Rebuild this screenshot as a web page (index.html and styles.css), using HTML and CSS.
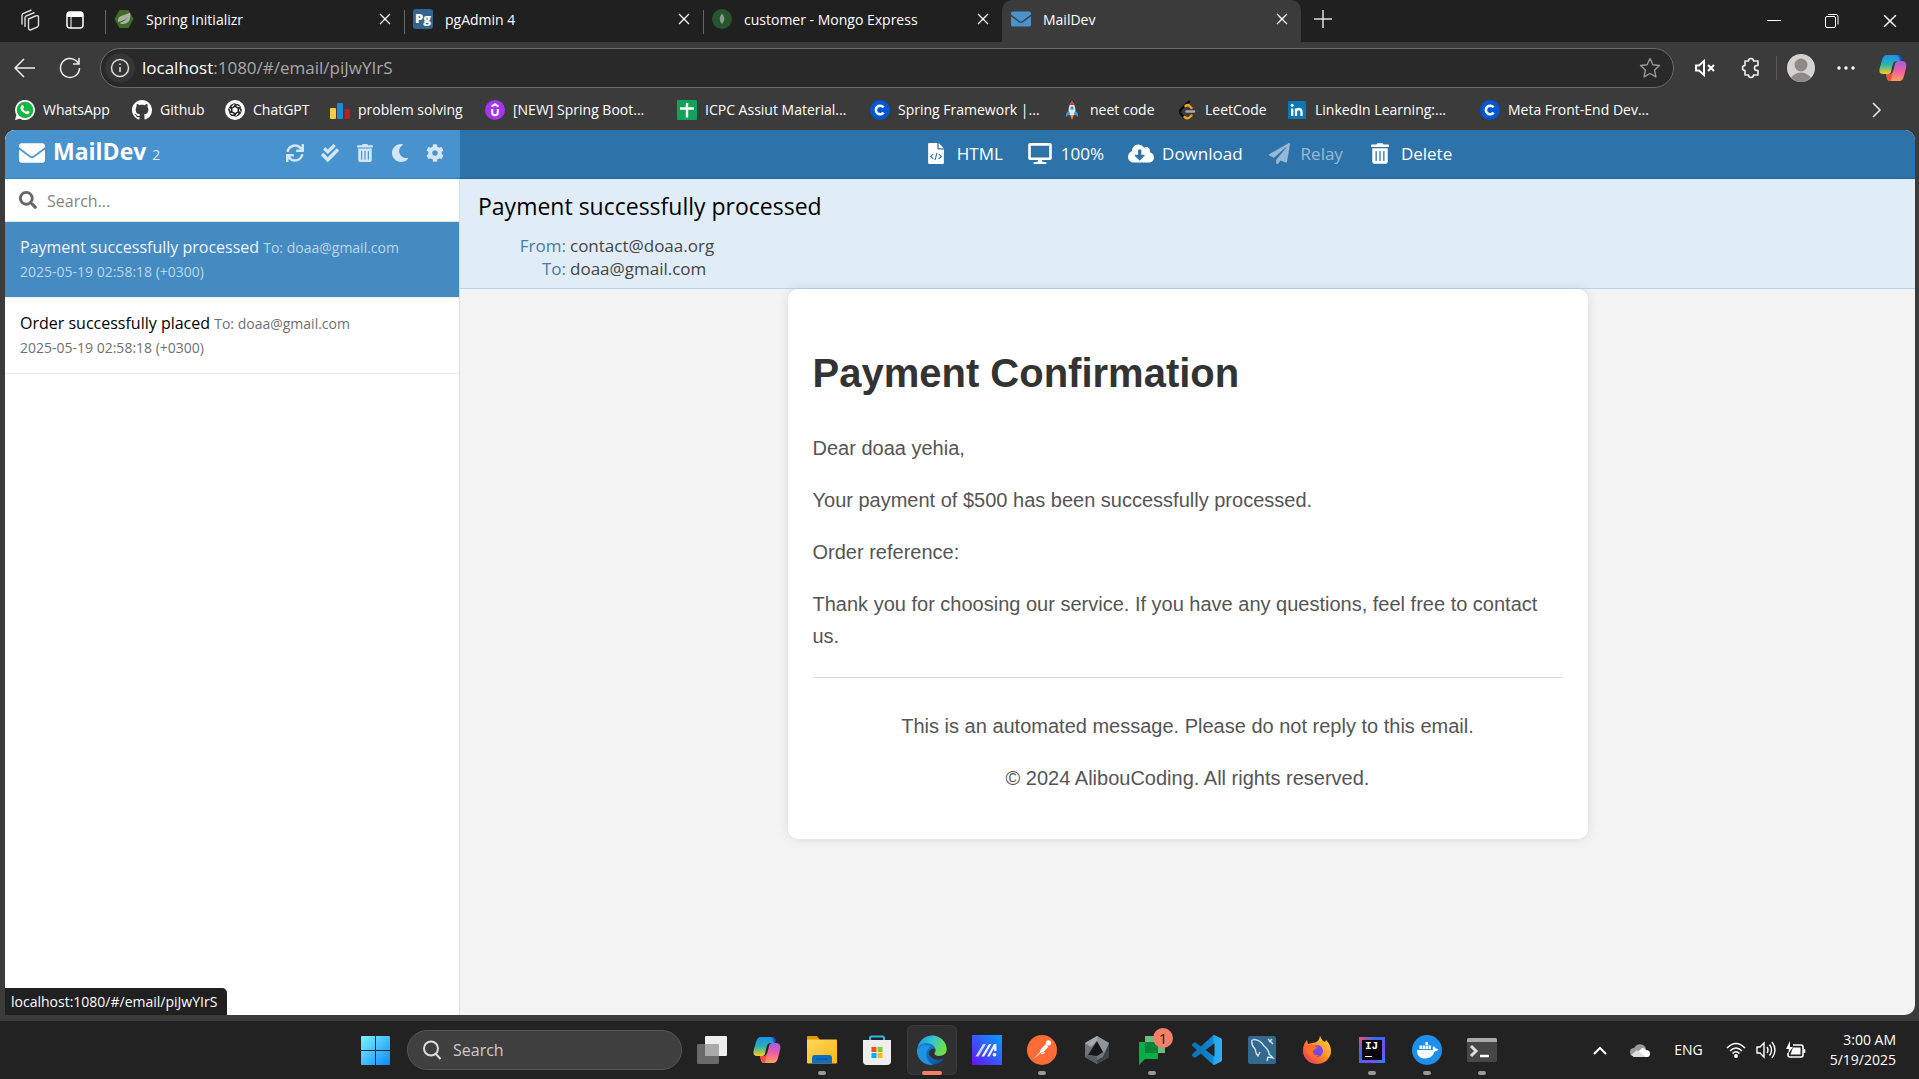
FILE: index.html
```html
<!DOCTYPE html>
<html lang="en">
<head>
<meta charset="utf-8">
<title>MailDev</title>
<link rel="stylesheet" href="styles.css">
</head>
<body>
<svg width="0" height="0" class="defs" aria-hidden="true">
  <defs>
    <linearGradient id="gWin" x1="0" y1="0" x2="1" y2="1"><stop offset="0" stop-color="#7df1ff"/><stop offset="1" stop-color="#0a8cff"/></linearGradient>
    <linearGradient id="gCopA" x1="0" y1="0" x2="0" y2="1"><stop offset="0" stop-color="#1a8fe8"/><stop offset=".5" stop-color="#2bb3b0"/><stop offset="1" stop-color="#f5d020"/></linearGradient>
    <linearGradient id="gCopB" x1="0" y1="0" x2="0" y2="1"><stop offset="0" stop-color="#a45bea"/><stop offset=".5" stop-color="#ee5fa0"/><stop offset="1" stop-color="#ffa05a"/></linearGradient>
    <linearGradient id="gEdge" x1="0" y1="0" x2="1" y2=".3"><stop offset="0" stop-color="#1c8fdc"/><stop offset=".5" stop-color="#2cc0dc"/><stop offset="1" stop-color="#6ee04c"/></linearGradient>
    <linearGradient id="gEdgeLow" x1="0" y1="0" x2="1" y2="1"><stop offset="0" stop-color="#1a84da"/><stop offset="1" stop-color="#0d4f9c"/></linearGradient>
    <linearGradient id="gMax" x1="1" y1="0" x2="0" y2="1"><stop offset="0" stop-color="#00a2ff"/><stop offset="1" stop-color="#6a10f5"/></linearGradient>
    <linearGradient id="gCode" x1="0" y1="0" x2="1" y2="0"><stop offset="0" stop-color="#0a72b5"/><stop offset=".68" stop-color="#0f86cf"/><stop offset=".74" stop-color="#27a5f0"/><stop offset="1" stop-color="#2eaff5"/></linearGradient>
    <linearGradient id="gFox" x1="1" y1="0" x2="0" y2="1"><stop offset="0" stop-color="#ffe14a"/><stop offset=".5" stop-color="#ff8a1f"/><stop offset="1" stop-color="#f0246e"/></linearGradient>
    <linearGradient id="gFold" x1="0" y1="0" x2="1" y2="1"><stop offset="0" stop-color="#ffd65c"/><stop offset="1" stop-color="#fbb914"/></linearGradient>
    <symbol id="x" viewBox="0 0 12 12"><path d="M1 1l10 10M11 1L1 11" stroke="#fff" stroke-width="1.3" fill="none"/></symbol>
    <symbol id="copilot" viewBox="0 0 28 28">
      <path d="M17 1h4l2 3-1 3h-4z" fill="#1c4fd8"/>
      <path d="M8 1h9c3 0 3 3 4 6h-4c-2 0-3 2-4 6l-1 5c-1 2-2 2-4 2H4c-4 0-4-3-3-7L3 6c1-3 2-5 5-5z" fill="url(#gCopA)"/>
      <path d="M20 27h-9c-3 0-3-3-4-7h4c2 0 3-1 4-6l1-4c1-3 2-3 4-3h3c4 0 5 3 4 7l-2 8c-1 3-2 5-5 5z" fill="url(#gCopB)"/>
      <path d="M7 20h4c2 0 2-1 3-3l-2 10c-3 0-4-3-5-7z" fill="#f4503c"/>
    </symbol>
    <symbol id="coursera" viewBox="0 0 20 20"><circle cx="10" cy="10" r="10" fill="#0056d2"/><path d="M13.6 7.4A4.3 4.3 0 1 0 13.6 12.6" fill="none" stroke="#fff" stroke-width="2.6"/></symbol>
    <symbol id="envelope" viewBox="0 64 512 384"><path fill="currentColor" d="M502.3 190.8c3.9-3.1 9.7-.2 9.7 4.7V400c0 26.5-21.5 48-48 48H48c-26.5 0-48-21.5-48-48V195.6c0-5 5.7-7.8 9.7-4.7 22.4 17.4 52.1 39.5 154.1 113.6 21.1 15.4 56.7 47.8 92.2 47.6 35.7.3 72-32.8 92.3-47.6 102-74.1 131.6-96.3 154-113.7zM256 320c23.2.4 56.6-29.2 73.4-41.4 132.7-96.3 142.8-104.7 173.4-128.7 5.8-4.5 9.2-11.5 9.2-18.9v-19c0-26.5-21.5-48-48-48H48c-26.5 0-48 21.5-48 48v19c0 7.4 3.4 14.3 9.2 18.9 30.6 23.9 40.7 32.4 173.4 128.7 16.8 12.2 50.2 41.8 73.4 41.4z"/></symbol>
    <symbol id="trash" viewBox="0 0 448 512"><path fill="currentColor" d="M32 464a48 48 0 0 0 48 48h288a48 48 0 0 0 48-48V128H32zm272-256a16 16 0 0 1 32 0v224a16 16 0 0 1-32 0zm-96 0a16 16 0 0 1 32 0v224a16 16 0 0 1-32 0zm-96 0a16 16 0 0 1 32 0v224a16 16 0 0 1-32 0zM432 32H312l-9.4-18.7A24 24 0 0 0 281.1 0H166.8a23.72 23.72 0 0 0-21.4 13.3L136 32H16A16 16 0 0 0 0 48v32a16 16 0 0 0 16 16h416a16 16 0 0 0 16-16V48a16 16 0 0 0-16-16z"/></symbol>
  </defs>
</svg>

<div class="screen">
  <header class="tabbar">
    <div class="tab-tools">
      <button class="plain" aria-label="Workspaces"><svg width="22" height="22" viewBox="0 0 22 22" fill="none" stroke="#ddd" stroke-width="1.4"><path d="M9.500 10l7-3q3-1 3 1v8q0 1-1 2l-7 3q-2 0-2-2z"/><path d="M6 18V9q0-1 1-2l8.500-3.500M3 15.500V6.500q0-1 1-2L12.500 1"/></svg></button>
      <button class="plain" aria-label="Tab actions"><svg width="20" height="20" viewBox="0 0 20 20"><rect x="2" y="2" width="16" height="16" rx="3" fill="none" stroke="#fff" stroke-width="1.5"/><path d="M2 7V4q0-2 2-2h12q2 0 2 2v3z" fill="#fff"/><path d="M6 7v11" stroke="#fff"/></svg></button>
    </div>
    <nav class="tabs" aria-label="Tabs">
      <div class="tab"><svg class="fav" viewBox="0 0 20 20"><path d="M5.5 1h9L19.5 10l-5 9h-9L.5 10z" fill="#3f6b26"/><path d="M4 13C3 6 10 7 16 3.500c1.500 6-1 11.500-7 11.500-1.500 0-2.500-.3-3.300-1C9 13 12 11 14 8c-3 3-6 4-10 5z" fill="#aab3a3"/></svg><span class="tab-title">Spring Initializr</span><button class="plain close" aria-label="Close tab"><svg width="12" height="12"><use href="#x"/></svg></button></div>
      <div class="tab"><span class="fav pg">Pg</span><span class="tab-title">pgAdmin 4</span><button class="plain close" aria-label="Close tab"><svg width="12" height="12"><use href="#x"/></svg></button></div>
      <div class="tab"><svg class="fav" viewBox="0 0 20 20"><circle cx="10" cy="10" r="10" fill="#28552d"/><path d="M10 4.500c3 3.500 3 7 0 10.500-3-3.500-3-7 0-10.500z" fill="#8d9a8f"/></svg><span class="tab-title">customer - Mongo Express</span><button class="plain close" aria-label="Close tab"><svg width="12" height="12"><use href="#x"/></svg></button></div>
      <div class="tab active"><svg class="fav blue" viewBox="0 0 20 20"><use href="#envelope" width="20" height="20"/></svg><span class="tab-title">MailDev</span><button class="plain close" aria-label="Close tab"><svg width="12" height="12"><use href="#x"/></svg></button></div>
    </nav>
    <button class="plain new-tab" aria-label="New tab"><svg width="18" height="18" viewBox="0 0 18 18"><path d="M9 0v18M0 9h18" stroke="#ddd" stroke-width="1.5"/></svg></button>
    <div class="win">
      <button class="plain" aria-label="Minimize"><svg width="14" height="14"><path d="M0 6.500h14" stroke="#fff"/></svg></button>
      <button class="plain" aria-label="Restore"><svg width="14" height="14" fill="none" stroke="#fff"><rect x=".5" y="2.5" width="10" height="11" rx="1.5"/><path d="M3 .5h8q2 0 2 2v8"/></svg></button>
      <button class="plain" aria-label="Close"><svg width="14" height="14" viewBox="0 0 12 12"><use href="#x"/></svg></button>
    </div>
  </header>

  <div class="toolbar">
    <button class="plain" aria-label="Back"><svg width="22" height="20" viewBox="0 0 22 20" fill="none" stroke="#eee" stroke-width="1.5"><path d="M21 10H1M10 1L1 10l9 9"/></svg></button>
    <button class="plain" aria-label="Refresh"><svg width="22" height="22" viewBox="0 0 22 22" fill="none" stroke="#eee" stroke-width="1.5"><path d="M20.500 11a9.500 9.500 0 1 1-3-7l2.500 2.500M20 1v6h-6"/></svg></button>
    <div class="address">
      <svg width="32" height="32" viewBox="0 0 32 32"><circle cx="16" cy="16" r="15" fill="#353535"/><circle cx="16" cy="16" r="8.500" fill="none" stroke="#ddd" stroke-width="1.5"/><path d="M16 15v5M16 11.500v1.500" stroke="#ddd" stroke-width="1.6"/></svg>
      <span class="url" contenteditable="true" role="textbox" aria-label="Address"><b>localhost</b>:1080/#/email/piJwYIrS</span>
      <button class="plain" aria-label="Favourite"><svg width="22" height="22" viewBox="0 0 22 22"><path d="M11 1.500l2.900 6.200 6.600.8-4.900 4.600 1.300 6.700L11 16.500l-5.900 3.300 1.300-6.700L1.500 8.500l6.600-.8z" fill="none" stroke="#999" stroke-width="1.4" stroke-linejoin="round"/></svg></button>
    </div>
    <div class="actions">
      <button class="plain" aria-label="Unmute"><svg width="22" height="18" viewBox="0 0 22 18" fill="none" stroke="#fff" stroke-width="2"><path d="M10 2v14l-5-4.500H2v-5h3zM14 6l6 6M20 6l-6 6"/></svg></button>
      <button class="plain" aria-label="Extensions"><svg width="22" height="22" viewBox="0 0 22 22" fill="none" stroke="#eee" stroke-width="1.6" stroke-linejoin="round"><path d="M5 4h3.500a2.500 2.500 0 0 1 5 0H18v4.500h-1a2.500 2.500 0 0 0 0 5h1V18h-4.500a2.500 2.500 0 0 1-5 0H5v-4.500a2.500 2.500 0 0 1 0-5z"/></svg></button>
      <div class="profile">
        <span class="rule"></span>
        <button class="plain" aria-label="Profile"><svg width="28" height="28" viewBox="0 0 28 28"><circle cx="14" cy="14" r="14" fill="#d5d2cf"/><circle cx="14" cy="11" r="6.500" fill="#8d8a87"/><path d="M4 23.500q10-10 20 0-10 9-20 0z" fill="#8d8a87"/></svg></button>
      </div>
      <button class="plain" aria-label="Settings and more"><svg width="18" height="4"><circle cx="2" cy="2" r="1.7" fill="#fff"/><circle cx="9" cy="2" r="1.7" fill="#fff"/><circle cx="16" cy="2" r="1.7" fill="#fff"/></svg></button>
      <button class="plain" aria-label="Copilot"><svg width="28" height="28"><use href="#copilot"/></svg></button>
    </div>
  </div>

  <nav class="bookmarks" aria-label="Favourites">
    <a href="#"><svg viewBox="0 0 20 20"><path d="M10 0a10 10 0 1 1-5 18.700L0 20l1.400-5A10 10 0 0 1 10 0z" fill="#fff"/><circle cx="10" cy="10" r="8.300" fill="#15b83f"/><path d="M6.500 5.500q1.500-1 2 .5l.5 1.500-1 1.300q1 2 3 3l1.300-1.200 2 1q.8 1-.8 2.200-2.500 1.200-6-2T6.500 5.500z" fill="#fff"/></svg>WhatsApp</a>
    <a href="#"><svg viewBox="0 0 16 16"><path fill="#fff" d="M8 0C3.580 0 0 3.580 0 8c0 3.540 2.290 6.530 5.470 7.590.4.070.55-.17.55-.38 0-.19-.01-.82-.01-1.490-2.010.37-2.530-.49-2.690-.94-.09-.23-.48-.94-.82-1.130-.28-.15-.68-.52-.01-.53.63-.01 1.080.58 1.230.82.72 1.210 1.870.87 2.330.66.07-.52.28-.87.51-1.070-1.780-.2-3.640-.89-3.640-3.950 0-.87.31-1.590.82-2.150-.08-.2-.36-1.020.08-2.120 0 0 .67-.21 2.200.82.64-.18 1.320-.27 2-.27s1.360.09 2 .27c1.530-1.040 2.200-.82 2.200-.82.44 1.100.16 1.920.08 2.120.51.56.82 1.270.82 2.150 0 3.070-1.870 3.750-3.650 3.950.29.25.54.73.54 1.480 0 1.070-.01 1.930-.01 2.200 0 .21.15.46.55.38A8.010 8.010 0 0 0 16 8c0-4.420-3.580-8-8-8z"/></svg>Github</a>
    <a href="#"><svg viewBox="0 0 20 20"><circle cx="10" cy="10" r="10" fill="#fff"/><g fill="none" stroke="#222" stroke-width="1"><path id="petal" d="M10 6.500L6.500 8.500v4.300a2.500 2.500 0 0 1-2.300-3.800M6.500 8.500V6.500a2.700 2.700 0 0 1 4.500-2"/><use href="#petal" transform="rotate(60 10 10)"/><use href="#petal" transform="rotate(120 10 10)"/><use href="#petal" transform="rotate(180 10 10)"/><use href="#petal" transform="rotate(240 10 10)"/><use href="#petal" transform="rotate(300 10 10)"/></g></svg>ChatGPT</a>
    <a href="#"><svg viewBox="0 0 20 20"><rect x="0" y="8" width="6" height="11" rx="1" fill="#f8cc45"/><rect x="7" y="3" width="6" height="16" rx="1" fill="#1d8ad2"/><rect x="14.500" y="9" width="5.500" height="10" rx="1" fill="#b61f24"/></svg>problem solving</a>
    <a href="#"><svg viewBox="0 0 20 20"><circle cx="10" cy="10" r="10" fill="#a435f0"/><path d="M6.500 6.500L10 4.300l3.500 2.200M7.200 9v3.500a2.800 2.800 0 0 0 5.600 0V9" fill="none" stroke="#fff" stroke-width="2"/></svg>[NEW] Spring Boot...</a>
    <a href="#"><svg viewBox="0 0 20 20"><rect width="20" height="20" rx="1" fill="#12a05a"/><path d="M10 3v14.500M3 8.500h14" stroke="#fff" stroke-width="2.4"/></svg>ICPC Assiut Material...</a>
    <a href="#"><svg><use href="#coursera"/></svg>Spring Framework |...</a>
    <a href="#"><svg viewBox="0 0 20 20"><path d="M10 1q5 6 2.500 14h-5Q5 7 10 1z" fill="#dfe7ee"/><path d="M10 1l2.500 4h-5z" fill="#d9312c"/><path d="M6.500 10L4 14v3l4-3zM13.500 10l2.500 4v3l-4-3z" fill="#3d95d8"/><circle cx="10" cy="8" r="1.6" fill="#287fc7"/><path d="M8 15h4l-2 5z" fill="#ff8c22"/></svg>neet code</a>
    <a href="#"><svg viewBox="0 0 20 20" fill="none" stroke-width="2.4" stroke-linecap="round"><path d="M12 1.500L4 9.500q-2 2.500 0 4.500l3 3.500" stroke="#080808"/><path d="M8.500 6q2.500-2 4.500.5l1.500 1.500M7.500 17q3 2.500 5.500 0l1.500-1.500" stroke="#f5a31b"/><path d="M9.500 11.500H17" stroke="#a8a8a8"/></svg>LeetCode</a>
    <a href="#"><svg viewBox="0 0 20 20"><rect x="1" y="1" width="18" height="18" rx="1" fill="#0a76b8"/><path d="M5.200 8.500V16M9 16V8.500M9 12q0-3 2.800-3 2.700 0 2.700 3v4" stroke="#fff" stroke-width="2.3" fill="none"/><circle cx="5.200" cy="5.200" r="1.5" fill="#fff"/></svg>LinkedIn Learning:...</a>
    <a href="#"><svg><use href="#coursera"/></svg>Meta Front-End Dev...</a>
    <button class="plain" aria-label="More favourites"><svg width="10" height="16" viewBox="0 0 10 16"><path d="M1 1l7 7-7 7" fill="none" stroke="#eee" stroke-width="1.5"/></svg></button>
  </nav>

  <div class="app">
    <aside class="sidebar">
      <div class="brandbar">
        <a class="brand" href="#"><svg width="26" height="20"><use href="#envelope"/></svg><strong>MailDev</strong><small>2</small></a>
        <div class="side-tools">
          <button class="plain" aria-label="Reload"><svg width="18" height="18" viewBox="0 0 512 512"><path fill="currentColor" d="M440.65 12.57l4 82.77A247.16 247.16 0 0 0 255.83 8C134.73 8 33.91 94.92 12.29 209.82A12 12 0 0 0 24.09 224h49.05a12 12 0 0 0 11.67-9.26 175.91 175.91 0 0 1 317-56.94l-101.46-4.86a12 12 0 0 0-12.57 12v47.41a12 12 0 0 0 12 12H500a12 12 0 0 0 12-12V12a12 12 0 0 0-12-12h-47.37a12 12 0 0 0-11.98 12.57zM255.83 432a175.61 175.61 0 0 1-146-77.8l101.8 4.87a12 12 0 0 0 12.57-12v-47.4a12 12 0 0 0-12-12H12a12 12 0 0 0-12 12V500a12 12 0 0 0 12 12h47.35a12 12 0 0 0 12-12.6l-4.15-82.57A247.17 247.17 0 0 0 255.83 504c121.11 0 221.93-86.92 243.55-201.82a12 12 0 0 0-11.8-14.18h-49.05a12 12 0 0 0-11.67 9.26A175.86 175.86 0 0 1 255.83 432z"/></svg></button>
          <button class="plain" aria-label="Mark all read"><svg width="18" height="18" viewBox="0 0 512 512"><path fill="currentColor" d="M505 174.800l-39.600-39.600c-9.400-9.400-24.600-9.400-33.900 0L192 374.700 80.600 263.200c-9.400-9.400-24.600-9.400-33.900 0L7 302.900c-9.400 9.400-9.400 24.600 0 34L175 505c9.400 9.400 24.600 9.400 33.900 0l296-296.200c9.400-9.500 9.400-24.700.1-34zm-324.300 106c6.200 6.300 16.400 6.300 22.600 0l208-208.200c6.200-6.300 6.200-16.400 0-22.600L366.100 4.700c-6.200-6.300-16.400-6.300-22.600 0L192 156.200l-55.400-55.500c-6.200-6.300-16.400-6.300-22.600 0L68.700 146c-6.200 6.300-6.200 16.400 0 22.600l112 112.200z"/></svg></button>
          <button class="plain" aria-label="Delete all"><svg width="16" height="18"><use href="#trash"/></svg></button>
          <button class="plain" aria-label="Dark theme"><svg width="18" height="18" viewBox="0 0 512 512"><path fill="currentColor" d="M283.211 512c78.962 0 151.079-35.925 198.857-94.792 7.068-8.708-.639-21.430-11.562-19.350-124.203 23.654-238.262-71.576-238.262-196.954 0-72.222 38.662-138.635 101.498-174.394 9.686-5.512 7.250-20.197-3.756-22.230A258.156 258.156 0 0 0 283.211 0c-141.309 0-256 114.511-256 256 0 141.309 114.511 256 256 256z"/></svg></button>
          <button class="plain" aria-label="Settings"><svg width="18" height="18" viewBox="0 0 512 512"><path fill="currentColor" d="M487.400 315.700l-42.600-24.600c4.300-23.200 4.300-47 0-70.200l42.600-24.600c4.900-2.800 7.100-8.600 5.500-14-11.100-35.600-30-67.800-54.700-94.600-3.800-4.100-10-5.100-14.800-2.300L380.800 110c-17.900-15.400-38.500-27.300-60.800-35.100V25.800c0-5.600-3.900-10.500-9.400-11.700-36.700-8.200-74.300-7.800-109.200 0-5.500 1.200-9.400 6.100-9.400 11.700V75c-22.200 7.900-42.800 19.800-60.800 35.100L88.700 85.500c-4.900-2.800-11-1.900-14.800 2.300-24.700 26.700-43.600 58.900-54.700 94.600-1.700 5.400.6 11.200 5.500 14L67.300 221c-4.300 23.200-4.300 47 0 70.200l-42.600 24.600c-4.900 2.800-7.100 8.600-5.500 14 11.100 35.600 30 67.800 54.700 94.600 3.800 4.100 10 5.100 14.800 2.300l42.600-24.600c17.900 15.400 38.500 27.300 60.800 35.100v49.200c0 5.600 3.900 10.500 9.400 11.700 36.700 8.200 74.300 7.800 109.200 0 5.500-1.200 9.400-6.100 9.400-11.700v-49.200c22.200-7.900 42.800-19.800 60.800-35.100l42.600 24.600c4.900 2.800 11 1.900 14.800-2.300 24.700-26.700 43.600-58.900 54.700-94.600 1.500-5.500-.7-11.300-5.600-14.100zM256 336c-44.100 0-80-35.900-80-80s35.900-80 80-80 80 35.900 80 80-35.900 80-80 80z"/></svg></button>
        </div>
      </div>
      <div class="inbox">
        <label class="search">
          <svg width="18" height="18" viewBox="0 0 512 512"><path fill="#666" d="M505 442.700L405.300 343c-4.500-4.500-10.600-7-17-7H372c27.600-35.300 44-79.700 44-128C416 93.100 322.900 0 208 0S0 93.100 0 208s93.100 208 208 208c48.300 0 92.700-16.400 128-44v16.300c0 6.400 2.500 12.500 7 17l99.700 99.700c9.400 9.400 24.600 9.400 33.900 0l28.300-28.300c9.400-9.400 9.400-24.600.1-34zM208 336c-70.700 0-128-57.200-128-128 0-70.700 57.200-128 128-128 70.700 0 128 57.200 128 128 0 70.700-57.200 128-128 128z"/></svg>
          <input type="search" placeholder="Search..." aria-label="Search">
        </label>
        <ul class="mails">
          <li><a class="mail selected" href="#/email/piJwYIrS"><span class="line"><span class="subject">Payment successfully processed</span> <span class="to">To: doaa@gmail.com</span></span><span class="date">2025-05-19 02:58:18 (+0300)</span></a></li>
          <li><a class="mail" href="#"><span class="line"><span class="subject">Order successfully placed</span> <span class="to">To: doaa@gmail.com</span></span><span class="date">2025-05-19 02:58:18 (+0300)</span></a></li>
        </ul>
      </div>
      <div class="status">localhost:1080/#/email/piJwYIrS</div>
    </aside>

    <main class="reader">
      <div class="mail-actions">
        <button class="plain"><span class="ico"><svg width="16" height="21" viewBox="0 0 384 512"><path fill="#fff" fill-rule="evenodd" d="M24 0h200v136q0 24 24 24h136v328q0 24-24 24H24q-24 0-24-24V24Q0 0 24 0zM256 0l128 128H256z"/><path d="M125 270l-62 58 62 58M259 270l62 58-62 58M216 240l-48 176" fill="none" stroke="#2d73aa" stroke-width="28"/></svg></span><span>HTML</span></button>
        <button class="plain"><span class="ico"><svg width="24" height="21" viewBox="0 0 576 512"><path fill="#fff" d="M528 0H48C21.500 0 0 21.500 0 48v320c0 26.500 21.500 48 48 48h192l-16 48h-72c-13.300 0-24 10.700-24 24s10.700 24 24 24h272c13.300 0 24-10.700 24-24s-10.700-24-24-24h-72l-16-48h192c26.500 0 48-21.500 48-48V48c0-26.500-21.500-48-48-48zm-16 352H64V64h448v288z"/></svg></span><span>100%</span></button>
        <button class="plain"><span class="ico"><svg width="26" height="21" viewBox="0 0 640 512"><path fill="#fff" d="M537.600 226.600c4.100-10.700 6.400-22.400 6.400-34.600 0-53-43-96-96-96-19.700 0-38.100 6-53.300 16.200C367 64.200 315.300 32 256 32c-88.400 0-160 71.600-160 160 0 2.700.1 5.400.2 8.100C40.200 219.800 0 273.200 0 336c0 79.500 64.500 144 144 144h368c70.700 0 128-57.300 128-128 0-61.900-44-113.600-102.400-125.400zm-132.900 88.700L299.300 420.700c-6.200 6.200-16.400 6.200-22.600 0L171.300 315.300c-10.100-10.100-2.900-27.300 11.300-27.300H248V176c0-8.800 7.200-16 16-16h48c8.800 0 16 7.200 16 16v112h65.400c14.200 0 21.400 17.200 11.300 27.300z"/></svg></span><span>Download</span></button>
        <button class="plain" disabled><span class="ico"><svg width="21" height="21" viewBox="0 0 512 512"><path fill="#fff" d="M476 3.200L12.500 270.600c-18.100 10.400-15.800 35.600 2.200 43.200L121 358.400l287.300-253.200c5.500-4.900 13.300 2.600 8.600 8.300L176 407v80.500c0 23.600 28.500 32.900 42.500 15.800L282 426l124.600 52.200c14.200 6 30.400-2.900 33-18.200l72-432C515 7.800 493.300-6.800 476 3.200z"/></svg></span><span>Relay</span></button>
        <button class="plain"><span class="ico"><svg width="18" height="21"><use href="#trash"/></svg></span><span>Delete</span></button>
      </div>
      <header class="mail-head">
        <h2>Payment successfully processed</h2>
        <dl><dt>From:</dt><dd>contact@doaa.org</dd><dt>To:</dt><dd>doaa@gmail.com</dd></dl>
      </header>
      <div class="mail-body">
        <article class="card">
          <h1>Payment Confirmation</h1>
          <p>Dear doaa yehia,</p>
          <p>Your payment of $500 has been successfully processed.</p>
          <p>Order reference:</p>
          <p>Thank you for choosing our service. If you have any questions, feel free to contact us.</p>
          <footer><p>This is an automated message. Please do not reply to this email.</p><p>© 2024 AlibouCoding. All rights reserved.</p></footer>
        </article>
      </div>
    </main>
  </div>

  <footer class="taskbar">
    <div class="dock">
      <button class="plain start" aria-label="Start"><svg width="29" height="29" viewBox="0 0 29 29"><path d="M0 1q0-1 1-1h13v14H0zM15 0h13q1 0 1 1v13H15zM0 15h14v14H1q-1 0-1-1zM15 15h14v13q0 1-1 1H15z" fill="url(#gWin)"/></svg></button>
      <label class="os-search"><svg width="18" height="20" viewBox="0 0 18 20" fill="none" stroke="#ddd" stroke-width="2"><circle cx="8" cy="8.500" r="7"/><path d="M12.500 13.500l5 5.500"/></svg><input type="search" placeholder="Search" aria-label="Search Windows"></label>
      <div class="apps">
        <button class="plain" aria-label="Task view"><svg width="30" height="30" viewBox="0 0 30 30"><rect x="8" y="1" width="22" height="20" rx="1" fill="#eee"/><rect x="0" y="9" width="22" height="20" rx="1" fill="#777" fill-opacity=".85"/><rect x="8" y="9" width="14" height="12" fill="#aaa"/></svg></button>
        <button class="plain" aria-label="Copilot"><svg width="28" height="28"><use href="#copilot"/></svg></button>
        <button class="plain run" aria-label="File Explorer"><svg width="30" height="28" viewBox="0 0 30 28"><path d="M0 1q0-1 1-1h9l3 4v6H0z" fill="#dd9a08"/><rect y="3.500" width="30" height="24" rx="1" fill="url(#gFold)"/><path d="M5 27.500V22q0-3 3-3h14q3 0 3 3v5.500z" fill="#0d6fc4"/><path d="M9 23h12" stroke="#06509a"/></svg></button>
        <button class="plain" aria-label="Store"><svg width="30" height="30" viewBox="0 0 30 30"><path d="M8 7V3q0-1.500 1.500-1.500h11Q22 1.500 22 3v4" fill="none" stroke="#2db5ea" stroke-width="2"/><path d="M1 5h28v21q0 4-4 4H5q-4 0-4-4z" fill="#eee"/><path d="M9.500 12h5v5h-5z" fill="#f1511b"/><path d="M15.500 12h5v5h-5z" fill="#80cc28"/><path d="M9.500 18h5v5h-5z" fill="#00adef"/><path d="M15.500 18h5v5h-5z" fill="#fbbc09"/></svg></button>
        <button class="plain current" aria-label="Edge"><svg width="30" height="30" viewBox="0 0 30 30"><path d="M1 11C5-2 22-3 28 8c3 6 2 11-3 12.500-4 1-8 0-7.500-2.500.5-1 1-1 1-3 0-3-4-4.500-8-4Q4 12 0 18 0 14 1 11z" fill="url(#gEdge)"/><path d="M0 16C1 9 7 7 12 8.500c4 1 6.500 3.500 6.500 6.500-.5-2-5.500-2-6.500 2-1 5 5 9 12 7.500l3-1C22 31 10 32 4 25Q0 21 0 16z" fill="url(#gEdgeLow)"/><path d="M11 14c-4 5-1 13 5 15.500C7 31 0 24 0 16 2 10 9 9 14 11.500q-2 .5-3 2.500z" fill="#1f93e3"/></svg></button>
        <button class="plain" aria-label="MyASUS"><svg width="30" height="30" viewBox="0 0 30 30"><rect width="30" height="30" fill="url(#gMax)"/><path d="M3.500 21.500L11 9h3L6.500 21.500z" fill="#c9d6ff"/><path d="M9.500 21.500L17 9h2.500L12 21.500z" fill="#fff"/><path d="M15 21.500L22 9h2.500v7h-2.500v-2.500L17.500 21.500z" fill="#e6edff"/><circle cx="22.500" cy="19.800" r="1.800" fill="#fff"/></svg></button>
        <button class="plain run" aria-label="Postman"><svg width="30" height="30" viewBox="0 0 30 30"><circle cx="15" cy="15" r="15" fill="#ff6c37"/><path d="M6 24.500l7-7.500 1-3 5-5 2.500 2.500-4.500 5-3.500 1.500z" fill="#fff"/><path d="M18 17.500l-4 1.500" stroke="#fff" stroke-width="1.2"/><circle cx="21.500" cy="7.800" r="2.600" fill="#fff"/></svg></button>
        <button class="plain" aria-label="Armoury"><svg width="28" height="30" viewBox="0 0 28 30"><path d="M14 1l12 7v14l-12 7-12-7V8z" fill="#6e7478"/><path d="M14 1L2 8l6 4 6-6z" fill="#a4a9ad"/><path d="M26 8v14l-12 7V25l6-3z" fill="#3e444a"/><path d="M14 6L5 20l9 1 6-4z" fill="#15181b"/><path d="M14 1l12 7-5 10L14 6z" fill="#8f9599"/><path d="M2 22l12 7v-7l-9-2z" fill="#575d63"/></svg></button>
        <button class="plain run" aria-label="Chat"><svg width="30" height="30" viewBox="0 0 30 30"><path d="M8 1h12v20H8z" fill="#68bd7a"/><path d="M20 8h8v10h-8z" fill="#68bd7a"/><path d="M2 7h19v17H8l-6 6z" fill="#08ad48"/><path d="M8 7h13v11H8z" fill="#098434"/></svg><span class="badge">1</span></button>
        <button class="plain" aria-label="VS Code"><svg width="30" height="30" viewBox="0 0 24 24"><path fill="url(#gCode)" d="M23.150 2.587L18.210.210a1.494 1.494 0 0 0-1.705.290l-9.460 8.630-4.120-3.128a.999.999 0 0 0-1.276.057L.327 7.261A1 1 0 0 0 .326 8.740L3.899 12 .326 15.260a1 1 0 0 0 .001 1.479L1.650 17.940a.999.999 0 0 0 1.276.057l4.120-3.128 9.460 8.630a1.492 1.492 0 0 0 1.704.290l4.942-2.377A1.500 1.500 0 0 0 24 20.060V3.939a1.500 1.500 0 0 0-.850-1.352zm-5.146 14.861L10.826 12l7.178-5.448v10.896z"/></svg></button>
        <button class="plain" aria-label="MySQL Workbench"><svg width="28" height="28" viewBox="0 0 28 28"><rect width="28" height="28" rx="2" fill="#31698f"/><path d="M4 4q7-2 12 6 5 4 5 8l4 4-5-1-1 4M4 4q-1 5 3 9 1 5 3 7l2-4M20 3l5 5M21 6l3-3" fill="none" stroke="#dce8f0" stroke-width="1.3"/></svg></button>
        <button class="plain" aria-label="Firefox"><svg width="28" height="28" viewBox="0 0 28 28"><path d="M17 0q2 5 5 6l1-2q5 5 5 11a14 13 0 0 1-28 0Q0 8 4 4l1 4 4-1Q16 7 17 0z" fill="url(#gFox)"/><circle cx="14" cy="15" r="6" fill="#7a47e8"/><path d="M4 9q5-2 8 1l3 2q-5 1-5 4 1 4 6 3-7 6-12-2z" fill="#ff6d2c"/></svg></button>
        <button class="plain run" aria-label="IntelliJ"><span class="ij"><span>IJ</span></span></button>
        <button class="plain run" aria-label="Docker"><svg width="30" height="30" viewBox="0 0 30 30"><circle cx="15" cy="15" r="15" fill="#1d8fed"/><path d="M5 15h16q-1-3 1-4l1.500 2.500 3 .5q-1 2.500-4 2.500Q20 24 12 23.500 5 23 5 15z" fill="#fff"/><path d="M7.500 10.500h2.500V14H7.500zM10.500 10.500H13V14h-2.500zM13.500 10.500H16V14h-2.500zM16.500 10.500H19V14h-2.500zM13.500 7H16v3h-2.500z" fill="#fff"/></svg></button>
        <button class="plain run" aria-label="Terminal"><svg width="30" height="24" viewBox="0 0 30 24"><rect width="30" height="24" rx="1.500" fill="#474747"/><path d="M0 4V1.500Q0 0 1.500 0h27Q30 0 30 1.500V4z" fill="#aaa"/><path d="M4 8l5 5-5 5" fill="none" stroke="#ddd" stroke-width="3"/><path d="M13 18h9" stroke="#fff" stroke-width="2.5"/></svg></button>
      </div>
    </div>
    <div class="tray">
      <button class="plain" aria-label="Hidden icons"><svg width="14" height="9" viewBox="0 0 14 9"><path d="M1 8l6-6 6 6" fill="none" stroke="#fff" stroke-width="2"/></svg></button>
      <svg width="20" height="14" viewBox="0 0 20 14"><path d="M4 13a4 4 0 0 1 0-8Q7 0 12 1.500q4 1.500 4 5z" fill="#999"/><path d="M3 14L12 5q3 0 4 2 4 0 4 3.500T17 14z" fill="#fff"/><path d="M1 12l6-5 9 7H4z" fill="#ddd"/></svg>
      <span class="lang">ENG</span>
      <div class="net">
        <svg width="20" height="16" viewBox="0 0 20 16" fill="none" stroke="#fff" stroke-width="1.5"><path d="M1 6q9-9 18 0M4 9q6-6 12 0M6.500 11.500q3.500-3.500 7 0"/><circle cx="10" cy="14" r="1.2" fill="#fff"/></svg>
        <svg width="20" height="18" viewBox="0 0 20 18" fill="none" stroke="#fff" stroke-width="1.4"><path d="M8 2v14l-4-4H1V6h3zM11 6q2 3 0 6M13.500 3.500q4 5.500 0 11M16 1q6 8 0 16"/></svg>
        <svg width="20" height="18" viewBox="0 0 20 18" fill="none" stroke="#fff" stroke-width="1.6"><path d="M7 4h8q2 0 2 2v8q0 2-2 2H4q-2 0-2-2v-2M18.500 8v4"/><path d="M7 6.500h7.500v7H4.500z" fill="#fff" stroke="none"/><path d="M4 0L0 8h3l-1 5 5-7H4z" fill="#fff" stroke="none"/></svg>
      </div>
      <time class="clock">3:00 AM<br>5/19/2025</time>
    </div>
  </footer>
</div>
</body>
</html>
```
FILE: styles.css
```css
* { box-sizing: border-box; }
body { margin: 0; font-family: "Open Sans", "Noto Sans", sans-serif; background: #3b3b3b; color: #fff; }
.defs { position: absolute; }
svg { display: block; flex: none; }
a { color: inherit; text-decoration: none; }
.plain { background: none; border: 0; padding: 0; margin: 0; font: inherit; color: inherit; display: flex; align-items: center; justify-content: center; }

.screen { min-height: 100vh; display: flex; flex-direction: column; }

/* tab strip */
.tabbar { display: flex; height: 42px; background: #202020; font-size: 14px; }
.tab-tools { display: flex; align-items: center; gap: 24px; padding: 0 19px 2px; width: 105px; }
.tabs { display: flex; }
.tab { display: flex; align-items: center; width: 299px; padding: 0 13px 4px 9px; position: relative; }
.tab:not(.active)::before { content: ""; position: absolute; left: 0; top: 10px; height: 24px; width: 1px; background: #666; }
.tab.active { background: #3b3b3b; border-radius: 10px 10px 0 0; }
.fav { width: 20px; height: 20px; margin-right: 12px; }
.fav.blue { color: #4892cd; }
.pg { background: #326690; border-radius: 3px; font-weight: 800; font-size: 13px; line-height: 18px; text-align: center; }
.tab-title { flex: 1; }
.new-tab { width: 44px; padding-bottom: 4px; }
.win { display: flex; margin-left: auto; }
.win .plain { width: 58px; }

/* address row */
.toolbar { display: flex; align-items: center; height: 52px; padding: 0 12px 0 14px; }
.toolbar > .plain { margin-right: 23px; }
.toolbar > .plain + .plain { margin-right: 19px; }
.address { flex: 1; display: flex; align-items: center; height: 40px; padding: 0 12px 0 3px; border: 1px solid #6b6b6b; border-radius: 20px; background: #292929; font-size: 17px; color: #a8a8a8; }
.url { flex: 1; margin-left: 6px; padding-bottom: 2px; outline: 0; }
.url b { font-weight: 400; color: #fff; }
.actions { display: flex; align-items: center; gap: 24px; margin-left: 20px; }
.profile { display: flex; align-items: center; gap: 10px; margin: 0 -2px 0 -10px; }
.rule { width: 1px; height: 24px; background: #5b5b5b; }

/* favourites */
.bookmarks { display: grid; grid-template-columns: 117px 93px 105px 155px 192px 193px 192px 115px 110px 193px 1fr 24px; align-items: center; height: 36px; padding: 0 30px 5px 15px; font-size: 14px; white-space: nowrap; }
.bookmarks a { display: flex; align-items: center; gap: 8px; }
.bookmarks a svg { width: 20px; height: 20px; }

/* mail client */
.app { flex: 1; display: grid; grid-template-columns: 455px 1fr; margin: 0 4px 6px 5px; border-radius: 10px 10px 10px 0; overflow: hidden; background: #f3f3f3; }
.sidebar { display: flex; flex-direction: column; background: #fff; position: relative; }
.brandbar { display: flex; align-items: center; justify-content: space-between; height: 49px; padding: 0 8px 2px 14px; background: #4892cd; border-bottom: 1px solid #2c7fc1; }
.brand { display: flex; align-items: baseline; gap: 6px; font-size: 23px; line-height: 32px; }
.brand svg { align-self: center; margin-right: 2px; }
.brand small { font-size: 14px; opacity: .8; }
.side-tools { display: flex; color: #d4e5f3; }
.side-tools .plain { width: 35px; }
.inbox { flex: 1; border-right: 1px solid #ddd; }
.search { display: flex; align-items: center; gap: 10px; height: 43px; padding: 0 14px; border-bottom: 1px solid #e0e5ea; }
.search input { flex: 1; border: 0; outline: 0; background: none; padding: 2px 0 0; font: 16px "Open Sans", sans-serif; color: #333; }
.search input::placeholder { color: #858585; }
.mails { list-style: none; margin: 0; padding: 0; }
.mail { display: block; height: 76px; padding: 13px 15px; border-bottom: 1px solid #eee; color: #000; line-height: 24px; font-size: 16px; white-space: nowrap; }
.mail .line, .mail .date { display: block; }
.mail .to, .mail .date { font-size: 14px; color: #707070; }
.mail.selected { background: #458bc2; color: #f0f5fa; }
.mail.selected .to, .mail.selected .date { color: #bdd6ea; }
.status { position: absolute; left: 0; bottom: 0; padding: 0 10px 0 6px; background: #202020; border-radius: 0 5px 0 0; font-size: 14px; line-height: 27px; }

.mail-actions { display: flex; justify-content: center; gap: 24px; height: 49px; padding-bottom: 2px; background: #2d73aa; border-bottom: 1px solid #23669b; font-size: 17px; }
.mail-actions .plain { gap: 8px; }
.mail-actions .plain:disabled { opacity: .5; }
.ico { display: flex; justify-content: center; width: 26px; }
.mail-head { height: 110px; padding: 11px 18px; background: #e0edf7; border-bottom: 1px solid #b5d5ee; color: #000; }
.mail-head h2 { margin: 0; font-size: 23px; font-weight: 400; line-height: 32px; }
.mail-head dl { display: grid; grid-template-columns: 88px 1fr; column-gap: 4px; margin: 12px 0 0; line-height: 23px; font-size: 17px; color: #444; }
.mail-head dt { text-align: right; color: #4a7ba5; }
.mail-head dd { margin: 0; }
.mail-body { padding: 0 20px; }
.card { max-width: 800px; margin: 0 auto; padding: 52px 25px 45px; background: #fff; border-radius: 10px; box-shadow: 0 0 12px rgba(0,0,0,.1); font: 20px/32px "Liberation Sans", Arial, sans-serif; color: #555; }
.card h1 { margin: 0 0 27px; font-size: 40px; line-height: 64px; color: #333; }
.card p { margin: 0 0 20px; }
.card footer { margin-top: 25px; padding-top: 32px; border-top: 1px solid #ddd; text-align: center; }
.card footer p:last-child { margin: 0; }

/* taskbar */
.taskbar { display: flex; align-items: center; height: 58px; padding-left: 361px; background: #222; }
.dock { display: flex; align-items: center; }
.os-search { display: flex; align-items: center; gap: 12px; width: 275px; height: 40px; margin: 0 5px 0 17px; padding: 0 15px; border: 1px solid #555; border-radius: 20px; background: #404040; }
.os-search input { width: 100%; border: 0; outline: 0; padding: 0; background: none; font: 16px "Open Sans", sans-serif; }
.os-search input::placeholder { color: #ccc; }
.apps { display: flex; gap: 5px; }
.apps .plain { position: relative; width: 50px; height: 50px; border-radius: 6px; }
.apps .current { background: #303030; box-shadow: 0 0 0 1px #3b3b3b inset; }
.apps .run::after, .apps .current::after { content: ""; position: absolute; left: 50%; bottom: 0; width: 8px; height: 4px; margin-left: -4px; border-radius: 2px; background: #999; }
.apps .current::after { width: 20px; margin-left: -10px; background: #f4806a; }
.badge { position: absolute; right: 4px; top: 3px; width: 20px; height: 20px; border-radius: 50%; background: #f4806a; color: #222; font-size: 15px; line-height: 20px; }
.ij { padding: 3px; width: 26px; height: 26px; background: linear-gradient(135deg, #ff4a6e, #2b6df5 35%, #7a4df0 70%, #1f8af5); }
.ij span { display: block; height: 20px; padding-left: 3px; text-align: left; background: #0a0610; font: bold 11px/13px "Liberation Mono", monospace; }
.ij span::after { content: ""; display: block; width: 7px; height: 1px; margin-top: 3px; background: #fff; }
.tray { display: flex; align-items: center; margin-left: auto; padding-right: 23px; font-size: 14px; line-height: 20px; }
.lang { margin: 0 23px 0 24px; }
.tray > .plain { margin-right: 23px; }
.net { display: flex; align-items: center; gap: 10px; }
.clock { text-align: right; margin-left: 24px; }
```
